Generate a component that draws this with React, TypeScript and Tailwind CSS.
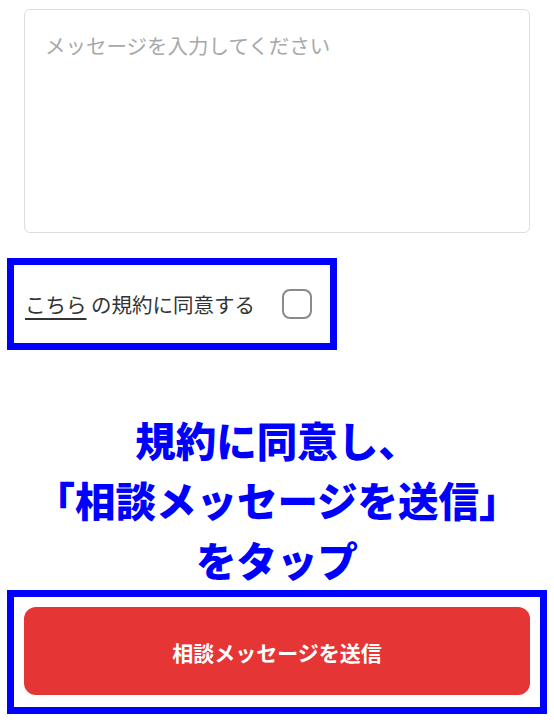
import React from "react";

export default function App() {
  return (
    <div
      className="w-[554px] h-[725px] bg-white overflow-hidden"
      style={{ fontFamily: '"Noto Sans CJK JP", "Noto Sans", sans-serif' }}
    >
      <div className="pt-[9px] pl-6">
        <textarea
          className="block w-[506px] h-[224px] border-[1.5px] border-[#dedede] rounded-[6px] resize-none outline-none px-[20px] pt-[21px] text-[20.5px] leading-[28px] text-[#333] placeholder:text-[#a8a8a8]"
          placeholder="メッセージを入力してください"
        />
      </div>

      <div className="mt-[25px] ml-[7px] w-[330px] h-[92px] border-[7px] border-[#0000ff] flex items-center pl-[11px]">
        <span className="text-[20.5px] leading-[28px] text-[#333] whitespace-nowrap">
          <span className="underline underline-offset-[5px] decoration-[1.5px]">こちら</span>
          <span> の規約に同意する</span>
        </span>
        <span className="ml-[27px] w-[30px] h-[30px] border-2 border-[#8a8a8a] rounded-[8px] shrink-0" />
      </div>

      <div className="mt-[60px] h-[180px] text-center text-[#0000ff] font-black text-[40.5px] leading-[60px]">
        <div>規約に同意し、</div>
        <div>「相談メッセージを送信」</div>
        <div>をタップ</div>
      </div>

      <div className="ml-[7px] w-[540px] h-[124px] border-[7px] border-[#0000ff] px-[10px] pt-[10px]">
        <button className="w-[506px] h-[88px] rounded-[12px] bg-[#e53535] text-white font-bold text-[21px] flex items-center justify-center pt-[4px]">
          相談メッセージを送信
        </button>
      </div>
    </div>
  );
}
